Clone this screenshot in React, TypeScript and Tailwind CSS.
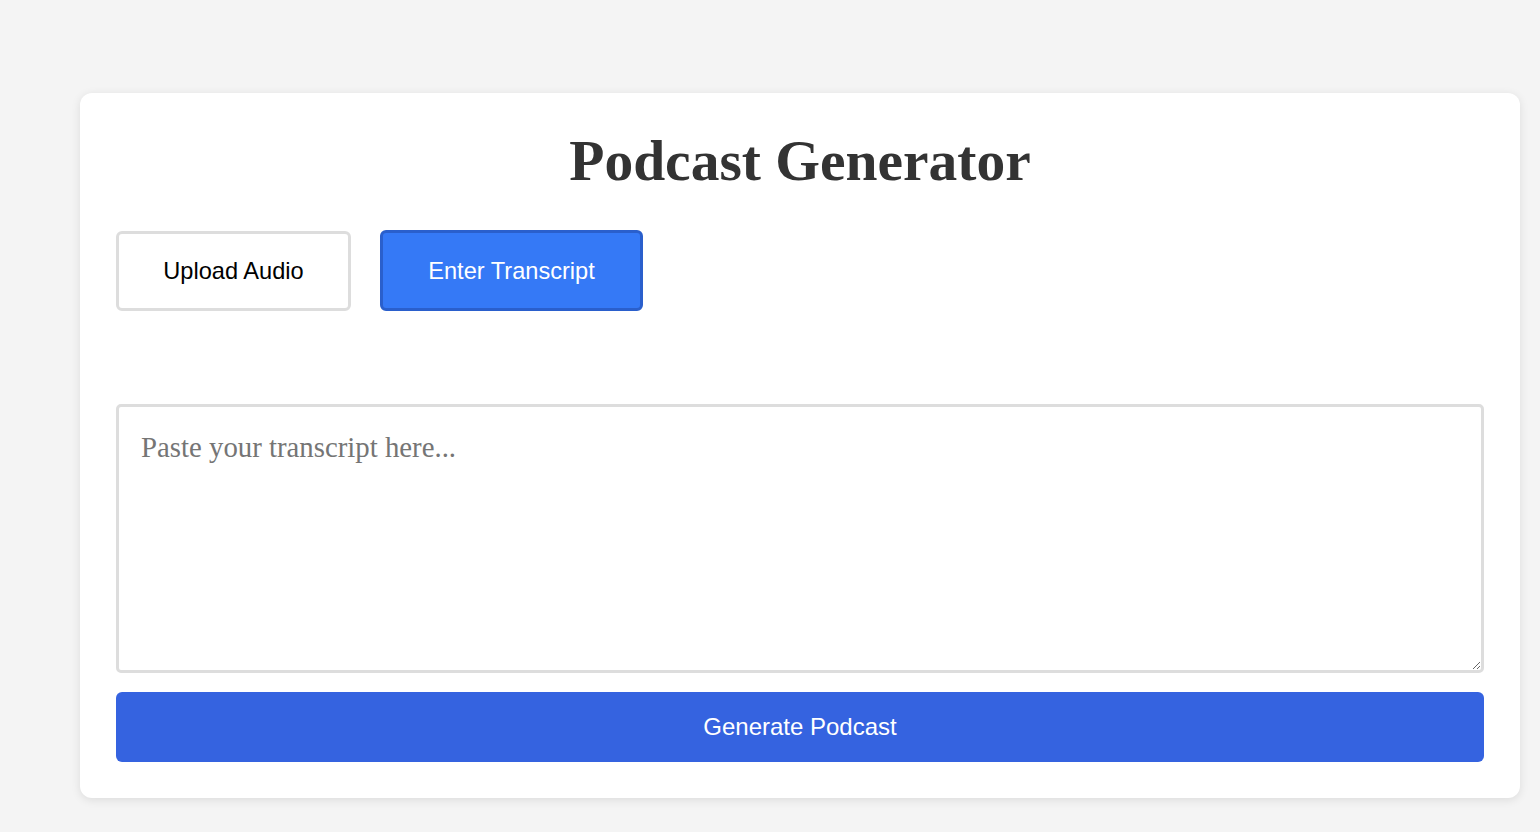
import React, { useState } from "react";

export default function App() {
  const [mode, setMode] = useState<"audio" | "transcript">("transcript");
  const [text, setText] = useState("");

  return (
    <div className="min-h-screen bg-[#f4f4f4] pt-[93px] pl-[80px] pr-[20px] pb-[34px]">
      <div className="w-[1440px] bg-white rounded-[12px] shadow-[0_2px_10px_rgba(0,0,0,0.1)] p-[36px]">
        <h1 className="text-center text-[57.5px] font-bold text-[#333] leading-[63px] font-['Liberation_Serif',Times,serif]">
          Podcast Generator
        </h1>

        <div className="flex gap-[29px] mt-[39px]">
          <button
            onClick={() => setMode("audio")}
            className={
              mode === "audio"
                ? "w-[235px] h-[80px] pt-[2px] rounded-[6px] border-[3px] border-[#2a5fcc] bg-[#3579f6] text-white text-[23.6px] font-['Liberation_Sans',Arial,sans-serif]"
                : "w-[235px] h-[80px] pt-[2px] rounded-[6px] border-[3px] border-[#dddddd] bg-white text-black text-[23.6px] font-['Liberation_Sans',Arial,sans-serif]"
            }
          >
            Upload Audio
          </button>
          <button
            onClick={() => setMode("transcript")}
            className={
              mode === "transcript"
                ? "w-[263px] h-[81px] -mt-[1px] pt-[2px] rounded-[6px] border-[3px] border-[#2a5fcc] bg-[#3579f6] text-white text-[23.6px] font-['Liberation_Sans',Arial,sans-serif]"
                : "w-[263px] h-[81px] -mt-[1px] pt-[2px] rounded-[6px] border-[3px] border-[#dddddd] bg-white text-black text-[23.6px] font-['Liberation_Sans',Arial,sans-serif]"
            }
          >
            Enter Transcript
          </button>
        </div>

        <textarea
          value={text}
          onChange={(e) => setText(e.target.value)}
          placeholder="Paste your transcript here..."
          className="block w-full h-[269px] mt-[93px] rounded-[5px] border-[3px] border-[#dddddd] px-[22px] pt-[24px] pb-[22px] text-[28.8px] leading-[33px] text-[#333] placeholder:text-[#757575] outline-none font-['Liberation_Serif',Times,serif]"
        />

        <button className="block w-full h-[70px] mt-[19px] rounded-[6px] bg-[#3563e0] text-white text-[24px] font-['Liberation_Sans',Arial,sans-serif]">
          Generate Podcast
        </button>
      </div>
    </div>
  );
}
